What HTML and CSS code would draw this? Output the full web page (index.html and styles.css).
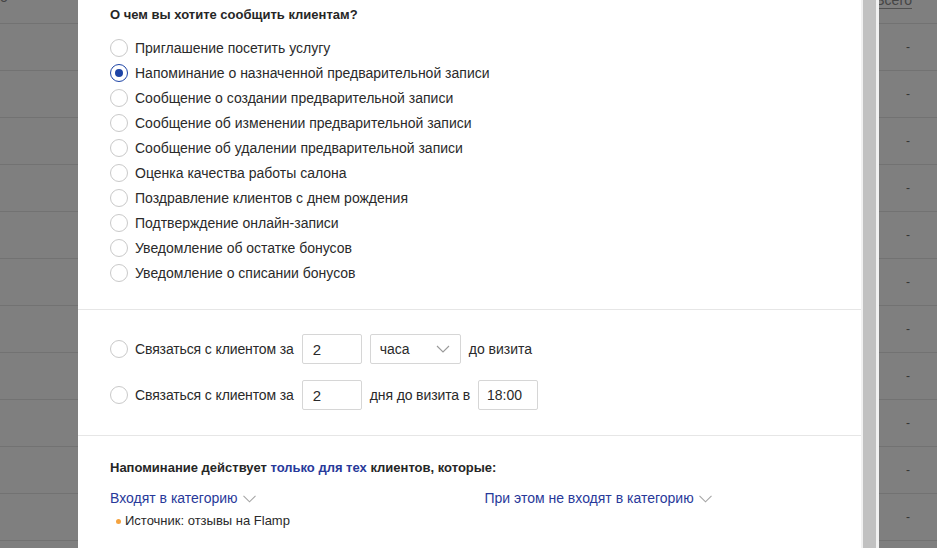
FILE: index.html
```html
<!DOCTYPE html>
<html lang="ru">
<head>
<meta charset="utf-8">
<title>Напоминание</title>
<link rel="stylesheet" href="styles.css">
</head>
<body>
<div class="page">
  <div class="thead">
    <span class="th-left">о</span>
    <span class="th-right"><span class="th-link">Всего</span></span>
  </div>
  <div class="row"><span class="cell-right">-</span></div>
  <div class="row"><span class="cell-right">-</span></div>
  <div class="row"><span class="cell-right">-</span></div>
  <div class="row"><span class="cell-right">-</span></div>
  <div class="row"><span class="cell-right">-</span></div>
  <div class="row"><span class="cell-right">-</span></div>
  <div class="row"><span class="cell-right">-</span></div>
  <div class="row"><span class="cell-right">-</span></div>
  <div class="row"><span class="cell-right">-</span></div>
  <div class="row"><span class="cell-right">-</span></div>
  <div class="row"><span class="cell-right">-</span></div>
</div>
<div class="overlay"></div>
<div class="modal">
  <div class="modal-body">
    <section class="sec sec-topics">
      <h3 class="title">О чем вы хотите сообщить клиентам?</h3>
      <ul class="radios">
        <li><span class="radio"></span>Приглашение посетить услугу</li>
        <li><span class="radio checked"></span>Напоминание о назначенной предварительной записи</li>
        <li><span class="radio"></span>Сообщение о создании предварительной записи</li>
        <li><span class="radio"></span>Сообщение об изменении предварительной записи</li>
        <li><span class="radio"></span>Сообщение об удалении предварительной записи</li>
        <li><span class="radio"></span>Оценка качества работы салона</li>
        <li><span class="radio"></span>Поздравление клиентов с днем рождения</li>
        <li><span class="radio"></span>Подтверждение онлайн-записи</li>
        <li><span class="radio"></span>Уведомление об остатке бонусов</li>
        <li><span class="radio"></span>Уведомление о списании бонусов</li>
      </ul>
    </section>
    <section class="sec sec-time">
      <div class="time-row">
        <span class="opt"><span class="radio"></span><span class="tight">Связаться с клиентом за</span></span>
        <span class="field">2</span>
        <span class="select">часа<svg class="chev" width="14" height="8" viewBox="0 0 14 8"><path d="M1 1l6 6 6-6" fill="none" stroke="#9a9a9a" stroke-width="1.1"/></svg></span>
        <span>до визита</span>
      </div>
      <div class="time-row">
        <span class="opt"><span class="radio"></span><span class="tight">Связаться с клиентом за</span></span>
        <span class="field">2</span>
        <span class="tight">дня до визита в</span>
        <span class="field field-time">18:00</span>
      </div>
    </section>
    <section class="sec sec-filter">
      <p class="title">Напоминание действует <span class="accent">только для тех</span> клиентов, которые:</p>
      <div class="cols">
        <div class="col">
          <span class="dd">Входят в категорию<svg class="dd-chev" width="13" height="8" viewBox="0 0 13 8"><path d="M0.5 0.8l6 6 6-6" fill="none" stroke="#a5a5a5" stroke-width="1.1"/></svg></span>
          <div class="tag"><i class="dot"></i>Источник: отзывы на Flamp</div>
        </div>
        <div class="col">
          <span class="dd">При этом не входят в категорию<svg class="dd-chev" width="13" height="8" viewBox="0 0 13 8"><path d="M0.5 0.8l6 6 6-6" fill="none" stroke="#a5a5a5" stroke-width="1.1"/></svg></span>
        </div>
      </div>
    </section>
  </div>
  <div class="scrollbar"><div class="thumb"></div></div>
</div>
</body>
</html>
```
FILE: styles.css
```css
html, body {
  margin: 0;
  padding: 0;
  height: 100%;
  overflow: hidden;
}
body {
  font-family: "Liberation Sans", Arial, sans-serif;
  font-size: 14px;
  color: #2a2a2a;
  background: #fff;
}

/* background page */
.page {
  width: 100%;
}
.thead {
  height: 23px;
  border-bottom: 1px solid #e4e4e4;
  display: flex;
  justify-content: space-between;
  align-items: flex-start;
  font-size: 14px;
  color: #8a8a8a;
}
.th-left {
  display: block;
  line-height: 13px;
  margin-top: -9px;
}
.th-right {
  display: block;
  padding-right: 25px;
}
.th-link {
  display: block;
  line-height: 13px;
  margin-top: -6px;
  padding-bottom: 1px;
  border-bottom: 1px solid #a0a0a0;
}
.row {
  height: 46px;
  border-bottom: 1px solid #e4e4e4;
  display: flex;
  justify-content: flex-end;
  align-items: center;
}
.cell-right {
  width: 58px;
  text-align: center;
  color: #6a6a6a;
  font-size: 12px;
}
.overlay {
  position: fixed;
  inset: 0;
  background: rgba(0, 0, 0, 0.5);
}

/* modal */
.modal {
  position: fixed;
  left: 78px;
  top: 0;
  bottom: 0;
  width: 801px;
  display: flex;
  background: #fff;
}
.modal-body {
  flex: 1;
  min-width: 0;
}
.scrollbar {
  width: 18px;
  background: #f1f1f1;
  padding: 0 3px 0 2px;
  box-sizing: border-box;
  display: flex;
}
.thumb {
  flex: 1;
  background: #c1c1c1;
}

.sec {
  padding-left: 32px;
  padding-right: 32px;
}
.sec + .sec {
  border-top: 1px solid #e6e6e6;
}
.title {
  margin: 0;
  font-size: 13px;
  font-weight: bold;
  line-height: 20px;
  color: #262626;
}
.sec-topics {
  padding-top: 5px;
  padding-bottom: 24px;
}
.sec-topics .title {
  margin-bottom: 10px;
}
.radios {
  list-style: none;
  margin: 0;
  padding: 0;
}
.radios li {
  height: 25px;
  display: flex;
  align-items: center;
  gap: 7px;
}
.radio {
  width: 18px;
  height: 18px;
  box-sizing: border-box;
  border: 1px solid #c9c9c9;
  border-radius: 50%;
  flex: none;
  display: inline-flex;
  align-items: center;
  justify-content: center;
}
.radio.checked {
  border: 1.5px solid #1d44a6;
}
.radio.checked::after {
  content: "";
  width: 8px;
  height: 8px;
  border-radius: 50%;
  background: #1d44a6;
}

.sec-time {
  padding-top: 24px;
  padding-bottom: 25px;
  display: flex;
  flex-direction: column;
  gap: 16px;
}
.time-row {
  display: flex;
  align-items: center;
  gap: 8px;
  height: 30px;
}
.tight {
  letter-spacing: -0.12px;
}
.opt {
  display: inline-flex;
  align-items: center;
  gap: 7px;
}
.field {
  width: 60px;
  height: 30px;
  box-sizing: border-box;
  border: 1px solid #d6d6d6;
  border-radius: 2px;
  padding: 0 10px;
  display: inline-flex;
  align-items: center;
  font-size: 15px;
}
.field-time {
  padding: 0 8px;
  font-size: 14px;
}
.select {
  width: 91px;
  height: 30px;
  box-sizing: border-box;
  border: 1px solid #d6d6d6;
  border-radius: 2px;
  padding: 0 10px 0 9px;
  display: inline-flex;
  align-items: center;
  justify-content: space-between;
}

.sec-filter {
  padding-top: 22px;
}
.sec-filter .title {
  margin-bottom: 10px;
}
.accent {
  color: #28399a;
}
.cols {
  display: grid;
  grid-template-columns: 1fr 1fr;
  column-gap: 30px;
}
.dd {
  display: inline-flex;
  align-items: center;
  gap: 5px;
  line-height: 20px;
  color: #28399a;
}
.dd-chev {
  margin-top: 1px;
}
.tag {
  margin-top: 4px;
  margin-left: 6px;
  display: flex;
  align-items: center;
  gap: 4px;
  font-size: 13px;
  line-height: 18px;
  color: #2a2a2a;
}
.dot {
  width: 5px;
  height: 5px;
  border-radius: 50%;
  background: #f5a33f;
  flex: none;
}
```
